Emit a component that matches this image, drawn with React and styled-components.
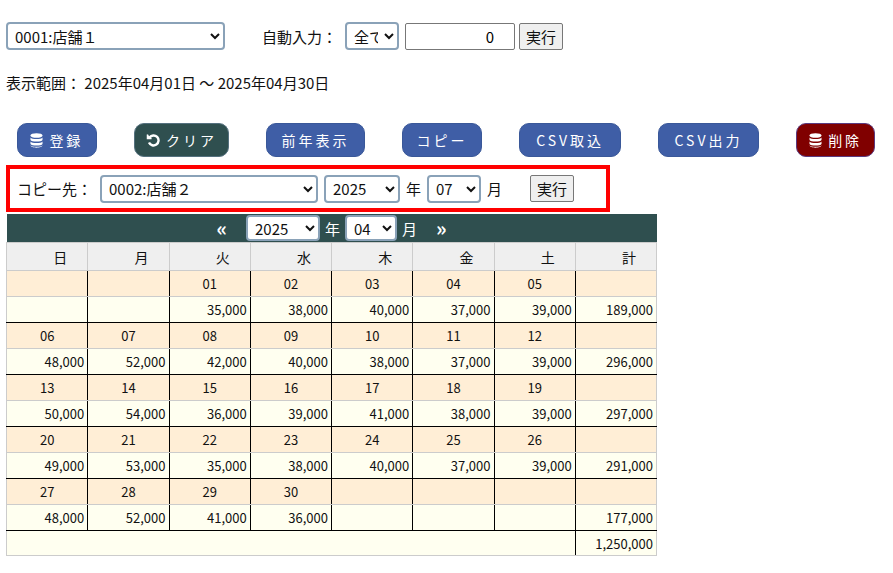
import React from "react";
import styled, { createGlobalStyle } from "styled-components";

const G = createGlobalStyle`
  body { margin: 0; font-family: "Noto Sans CJK JP", "Noto Sans", sans-serif; font-size: 14px; color: #111; background: #fff; }
  select, input, button { font-family: inherit; font-size: 15px; }
`;
const Page = styled.div`padding: 22px 6px 0 6px; width: 881px; box-sizing: border-box;`;
const Row = styled.div`display: flex; align-items: center; gap: ${p => p.gap || 6}px;`;
const Sel = styled.select`
  width: ${p => p.w}px; height: 28px; border: 2px solid #8aa2b8; border-radius: 4px; background: #fff; padding: 0 3px; color: #111;
`;
const Label = styled.span`font-size: 15px; margin-left: ${p => p.ml || 0}px; margin-right: ${p => p.mr || 0}px;`;
const Num = styled.input`width: 110px; height: 27px; box-sizing: border-box; border: 1px solid #777; border-radius: 2px; text-align: right; padding: 0 20px;`;
const Btn = styled.button`height: 27px; padding: 0 6px; border: 1px solid #777; border-radius: 2px; background: #efefef; color: #111; margin-left: ${p => p.ml || 0}px;`;
const Range = styled.div`margin-top: 22px; font-size: 15px;`;
const Bar = styled.div`display: flex; margin: 30px 0 0 11px; gap: 37px;`;
const Act = styled.button`
  height: 34px; width: ${p => p.w}px; border-radius: 10px; border: 1px solid ${p => p.bd || "#3a5899"};
  background: ${p => p.bg || "#3f5ea6"}; color: #fff; font-size: 14px; letter-spacing: 3px;
  display: flex; align-items: center; justify-content: center; gap: 6px; padding: 0;
`;
const CopyBox = styled.div`
  margin-top: 8px; width: 604px; height: 47px; box-sizing: border-box; border: 4px solid #f00;
  display: flex; align-items: center; padding-left: 7px; gap: 6px;
`;
const Table = styled.table`border-collapse: collapse; width: 651px; table-layout: fixed; margin-top: 2px; font-size: 13px;`;
const NavTd = styled.td`background: #2f4f4f; height: 28px; padding: 0; color: #fff;`;
const Nav = styled.div`display: flex; align-items: center; justify-content: center; gap: 5px; font-size: 15px;`;
const Arrow = styled.span`font-size: 20px; font-weight: bold; margin: 0 14px; line-height: 1;`;
const NavSel = styled(Sel)`height: 26px; border-color: #8aa2b8;`;
const Th = styled.th`background: #efefef; border: 1px solid #ccc; height: 27px; font-weight: normal; font-size: 14px; text-align: right; padding: 0 20px 0 0;`;
const DayTd = styled.td`
  background: #ffeed6; height: 25px; padding: 0 0 0 33px; border-left: 1px solid ${p => p.first ? "#ccc" : "#000"};
  border-right: 1px solid ${p => p.last ? "#ccc" : "#000"}; border-top: 1px solid #000; border-bottom: 1px solid #ccc;
`;
const AmtTd = styled.td`
  background: #fffff0; height: 25px; padding: 0 3px 0 0; text-align: right; border-left: 1px solid ${p => p.first ? "#ccc" : "#000"};
  border-right: 1px solid ${p => p.last ? "#ccc" : "#000"}; border-bottom: 1px solid #000; border-top: 1px solid #ccc;
`;
const TotTd = styled.td`background: #fffff0; height: 24px; text-align: right; padding: 0 3px 0 0; border: 1px solid #ccc; border-right: 1px solid ${p => p.dark ? "#000" : "#ccc"};`;

const Db = () => (
  <svg width="13" height="15" viewBox="0 0 13 15" fill="#fff"><ellipse cx="6.5" cy="2.5" rx="6" ry="2.3"/><path d="M.5 4.5c1 2 11 2 12 0v2.5c-1 2-11 2-12 0z"/><path d="M.5 8.5c1 2 11 2 12 0v2.5c-1 2-11 2-12 0z"/><path d="M.5 12.3c1 2 11 2 12 0c0 1.5-3 2.4-6 2.4s-6-.9-6-2.4z"/></svg>
);
const Undo = () => (
  <svg width="14" height="14" viewBox="0 0 14 14" fill="none" stroke="#fff" strokeWidth="2.4"><path d="M3.5 4.5A5 5 0 1 1 3 9.5"/><path d="M1.5 1.5v4h4" fill="#fff" strokeWidth="1.5"/></svg>
);

const weeks = [
  [["",""],["",""],["01","35,000"],["02","38,000"],["03","40,000"],["04","37,000"],["05","39,000"],"189,000"],
  [["06","48,000"],["07","52,000"],["08","42,000"],["09","40,000"],["10","38,000"],["11","37,000"],["12","39,000"],"296,000"],
  [["13","50,000"],["14","54,000"],["15","36,000"],["16","39,000"],["17","41,000"],["18","38,000"],["19","39,000"],"297,000"],
  [["20","49,000"],["21","53,000"],["22","35,000"],["23","38,000"],["24","40,000"],["25","37,000"],["26","39,000"],"291,000"],
  [["27","48,000"],["28","52,000"],["29","41,000"],["30","36,000"],["",""],["",""],["",""],"177,000"],
];

export default function App() {
  return (
    <Page>
      <G />
      <Row>
        <Sel w={219}><option>0001:店舗１</option></Sel>
        <Label ml={31} mr={2}>自動入力：</Label>
        <Sel w={54}><option>全て</option></Sel>
        <Num defaultValue="0" />
        <Btn style={{ marginLeft: -2 }}>実行</Btn>
      </Row>
      <Range>表示範囲： 2025年04月01日 ～ 2025年04月30日</Range>
      <Bar>
        <Act w={81}><Db />登録</Act>
        <Act w={97} bg="#2f4f4f" bd="#55717f"><Undo />クリア</Act>
        <Act w={100}>前年表示</Act>
        <Act w={82}>コピー</Act>
        <Act w={103}>CSV取込</Act>
        <Act w={103}>CSV出力</Act>
        <Act w={80} bg="#800000" bd="#5a3a80"><Db />削除</Act>
      </Bar>
      <CopyBox>
        <Label mr={2}>コピー先：</Label>
        <Sel w={218}><option>0002:店舗２</option></Sel>
        <Sel w={76}><option>2025</option></Sel>
        <Label>年</Label>
        <Sel w={54}><option>07</option></Sel>
        <Label>月</Label>
        <Btn ml={22}>実行</Btn>
      </CopyBox>
      <Table>
        <tbody>
          <tr><NavTd colSpan={8}><Nav>
            <Arrow>«</Arrow>
            <NavSel w={74}><option>2025</option></NavSel><span>年</span>
            <NavSel w={52}><option>04</option></NavSel><span>月</span>
            <Arrow>»</Arrow>
          </Nav></NavTd></tr>
          <tr>{["日","月","火","水","木","金","土","計"].map(d => <Th key={d}>{d}</Th>)}</tr>
          {weeks.map((w, i) => (
            <React.Fragment key={i}>
              <tr>{w.slice(0,7).map((c, j) => <DayTd key={j} first={j===0}>{c[0]}</DayTd>)}<DayTd last /></tr>
              <tr>{w.slice(0,7).map((c, j) => <AmtTd key={j} first={j===0}>{c[1]}</AmtTd>)}<AmtTd last>{w[7]}</AmtTd></tr>
            </React.Fragment>
          ))}
          <tr><TotTd colSpan={7} dark /><TotTd>1,250,000</TotTd></tr>
        </tbody>
      </Table>
    </Page>
  );
}
